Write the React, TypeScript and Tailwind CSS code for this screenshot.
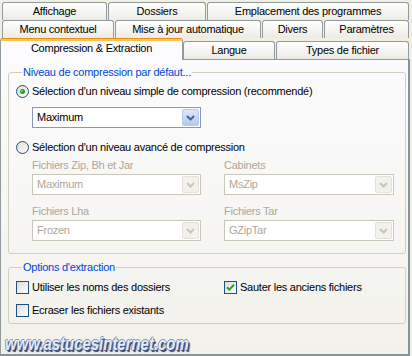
import React from 'react';

const font = "font-['Liberation_Sans','DejaVu_Sans',sans-serif]";

function Tab({ label, w, selected = false }: { label: string; w: string; selected?: boolean }) {
  if (selected) {
    return (
      <div
        className={`relative z-10 -mb-px flex h-[22px] ${w} flex-col rounded-t-[3px] border-x border-[#919b9c] bg-[#fcfcfe]`}
      >
        <div className="h-px rounded-t-[3px] bg-[#e68b2c]" />
        <div className="h-[2px] bg-[#ffc73c]" />
        <div className="flex flex-1 items-start justify-center pt-px">{label}</div>
      </div>
    );
  }
  return (
    <div
      className={`flex h-[18px] ${w} shrink-0 items-center justify-center rounded-t-[3px] border-x border-t border-[#919b9c] bg-gradient-to-b from-white to-[#ecebe5]`}
    >
      {label}
    </div>
  );
}

function Radio({ checked = false }: { checked?: boolean }) {
  return (
    <svg width="13" height="13" viewBox="0 0 13 13" className="shrink-0">
      <defs>
        <linearGradient id={checked ? 'rg1' : 'rg2'} x1="0" y1="0" x2="1" y2="1">
          <stop offset="0" stopColor="#dcdbd5" />
          <stop offset="1" stopColor="#ffffff" />
        </linearGradient>
      </defs>
      <circle cx="6.5" cy="6.5" r="6" fill={`url(#${checked ? 'rg1' : 'rg2'})`} stroke="#1c5180" />
      {checked && (
        <>
          <circle cx="6.5" cy="6.5" r="2.5" fill="#21a121" />
          <circle cx="6" cy="6" r="1" fill="#7be07b" />
        </>
      )}
    </svg>
  );
}

function Checkbox({ checked = false }: { checked?: boolean }) {
  return (
    <svg width="13" height="13" viewBox="0 0 13 13" className="shrink-0">
      <defs>
        <linearGradient id={checked ? 'cg1' : 'cg2'} x1="0" y1="0" x2="1" y2="1">
          <stop offset="0" stopColor="#dcdbd5" />
          <stop offset="1" stopColor="#ffffff" />
        </linearGradient>
      </defs>
      <rect x="0.5" y="0.5" width="12" height="12" fill={`url(#${checked ? 'cg1' : 'cg2'})`} stroke="#1c5180" />
      {checked && <path d="M3 6.2 L5.3 8.6 L10 3.8" fill="none" stroke="#21a121" strokeWidth="2" />}
    </svg>
  );
}

function Combo({ value, w, disabled = false }: { value: string; w: string; disabled?: boolean }) {
  return (
    <div
      className={`flex h-[21px] ${w} items-center border bg-white p-px ${
        disabled ? 'border-[#c9c7ba] text-[#aca899]' : 'border-[#7f9db9] text-black'
      }`}
    >
      <span className="flex-1 pl-[3px]">{value}</span>
      <div
        className={`flex h-[17px] w-[17px] items-center justify-center rounded-[2px] border ${
          disabled
            ? 'border-[#e4e2d8] bg-[#f2f1eb]'
            : 'border-[#b6c8f4] bg-gradient-to-b from-[#dce6fd] to-[#b4c8f6]'
        }`}
      >
        <svg width="9" height="6" viewBox="0 0 9 6">
          <path d="M1 1 L4.5 4.5 L8 1" fill="none" stroke={disabled ? '#c9c7ba' : '#4d6185'} strokeWidth="2" />
        </svg>
      </div>
    </div>
  );
}

export default function App() {
  return (
    <div
      className={`h-[356px] w-[412px] overflow-hidden bg-[#f1efe2] text-[11px] leading-[13px] tracking-[-0.25px] text-black ${font}`}
    >
      {/* Tabs */}
      <div className="flex flex-col">
        <div className="mt-[2px] flex gap-px pl-[2px]">
          <Tab label="Affichage" w="w-[105px]" />
          <Tab label="Dossiers" w="w-[98px]" />
          <Tab label="Emplacement des programmes" w="w-[202px]" />
        </div>
        <div className="flex gap-px pl-[2px]">
          <Tab label="Menu contextuel" w="w-[112px]" />
          <Tab label="Mise à jour automatique" w="w-[146px]" />
          <Tab label="Divers" w="w-[61px]" />
          <Tab label="Paramètres" w="w-[85px]" />
        </div>
        <div className="flex h-[21px] items-end">
          <Tab label="Compression & Extraction" w="w-[183px]" selected />
          <Tab label="Langue" w="w-[92px]" />
          <div className="ml-px">
            <Tab label="Types de fichier" w="w-[133px]" />
          </div>
        </div>
      </div>

      {/* Panel */}
      <div className="relative flex h-[297px] w-[410px] flex-col border border-r-2 border-b-2 border-[#919b9c] border-r-[#8a9394] border-b-[#8a9394] bg-gradient-to-b from-[#fcfcfe] to-[#f2f1eb] pr-[2px] pl-[7px] pt-[6px]">
        <fieldset className="rounded-[3px] border border-[#d0d0bf] pb-[12px] pl-[7px]">
          <legend className="ml-[6px] px-px text-[#0046d5]">Niveau de compression par défaut...</legend>
          <div className="mt-[6px] flex items-center gap-[3px]">
            <Radio checked />
            <span>Sélection d'un niveau simple de compression (recommendé)</span>
          </div>
          <div className="mt-[9px] pl-[16px]">
            <Combo value="Maximum" w="w-[169px]" />
          </div>
          <div className="mt-[13px] flex items-center gap-[3px]">
            <Radio />
            <span>Sélection d'un niveau avancé de compression</span>
          </div>
          <div className="grid grid-cols-[192px_170px] pl-[16px] text-[#aca899]">
            <div className="mt-[5px]">Fichiers Zip, Bh et Jar</div>
            <div className="mt-[5px]">Cabinets</div>
            <div className="mt-[2px]">
              <Combo value="Maximum" w="w-[169px]" disabled />
            </div>
            <div className="mt-[2px]">
              <Combo value="MsZip" w="w-[170px]" disabled />
            </div>
            <div className="mt-[10px]">Fichiers Lha</div>
            <div className="mt-[10px]">Fichiers Tar</div>
            <div className="mt-[2px]">
              <Combo value="Frozen" w="w-[169px]" disabled />
            </div>
            <div className="mt-[2px]">
              <Combo value="GZipTar" w="w-[170px]" disabled />
            </div>
          </div>
        </fieldset>

        <fieldset className="mt-[7px] rounded-[3px] border border-[#d0d0bf] pb-[6px] pl-[7px]">
          <legend className="ml-[6px] px-px text-[#0046d5]">Options d'extraction</legend>
          <div className="mt-[7px] grid grid-cols-[208px_1fr] gap-y-[10px]">
            <div className="flex items-center gap-[3px]">
              <Checkbox />
              <span>Utiliser les noms des dossiers</span>
            </div>
            <div className="flex items-center gap-[3px]">
              <Checkbox checked />
              <span>Sauter les anciens fichiers</span>
            </div>
            <div className="flex items-center gap-[3px]">
              <Checkbox />
              <span>Ecraser les fichiers existants</span>
            </div>
          </div>
        </fieldset>

        {/* watermark */}
        <div className="absolute bottom-[1px] left-[4px] origin-left scale-x-[0.83] text-[18px] font-bold italic leading-[18px] tracking-normal text-[#e4ecf8] [text-shadow:1px_1px_0_#3f5785,-1px_0_0_#6f84ad,0_-1px_0_#8395bb,2px_2px_1px_#2c3f66]">
          www.astucesinternet.com
        </div>
      </div>
    </div>
  );
}
